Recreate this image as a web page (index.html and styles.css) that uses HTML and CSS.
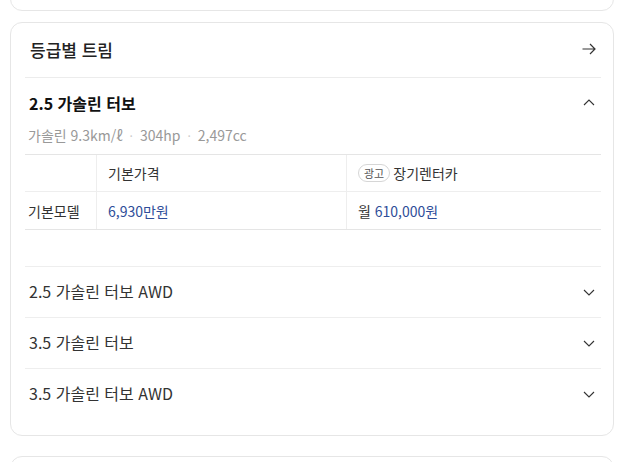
FILE: index.html
```html
<!DOCTYPE html>
<html lang="ko">
<head>
<meta charset="utf-8">
<link rel="stylesheet" href="styles.css">
</head>
<body>
<div class="card card-prev"></div>
<section class="card trims">
  <div class="trims-head">
    <h2 class="trims-title">등급별 트림</h2>
    <svg class="icon-arrow" width="14" height="12" viewBox="0 0 14 12"><path d="M0.5 6H13M8 1l5 5-5 5" fill="none" stroke="#333" stroke-width="1.2"/></svg>
  </div>
  <div class="trim open">
    <div class="trim-row">
      <h3 class="trim-name bold">2.5 가솔린 터보</h3>
      <svg class="chev" width="12" height="7" viewBox="0 0 12 7"><path d="M1 6l5-5 5 5" fill="none" stroke="#333" stroke-width="1.1"/></svg>
    </div>
    <p class="spec">가솔린 9.3km/ℓ<span class="dot">·</span>304hp<span class="dot">·</span>2,497cc</p>
    <div class="price-table">
      <div class="cell c1 head"></div>
      <div class="cell c2 head">기본가격</div>
      <div class="cell c3 head"><span class="ad">광고</span><span>장기렌터카</span></div>
      <div class="cell c1">기본모델</div>
      <div class="cell c2"><span class="blue">6,930만원</span></div>
      <div class="cell c3"><span>월 <span class="blue">610,000원</span></span></div>
    </div>
  </div>
  <div class="trim">
    <div class="trim-row">
      <h3 class="trim-name">2.5 가솔린 터보 AWD</h3>
      <svg class="chev" width="12" height="7" viewBox="0 0 12 7"><path d="M1 1l5 5 5-5" fill="none" stroke="#333" stroke-width="1.1"/></svg>
    </div>
  </div>
  <div class="trim">
    <div class="trim-row">
      <h3 class="trim-name">3.5 가솔린 터보</h3>
      <svg class="chev" width="12" height="7" viewBox="0 0 12 7"><path d="M1 1l5 5 5-5" fill="none" stroke="#333" stroke-width="1.1"/></svg>
    </div>
  </div>
  <div class="trim">
    <div class="trim-row">
      <h3 class="trim-name">3.5 가솔린 터보 AWD</h3>
      <svg class="chev" width="12" height="7" viewBox="0 0 12 7"><path d="M1 1l5 5 5-5" fill="none" stroke="#333" stroke-width="1.1"/></svg>
    </div>
  </div>
</section>
<div class="card card-next"></div>
</body>
</html>
```
FILE: styles.css
```css
* { box-sizing: border-box; }
html, body { margin: 0; padding: 0; background: #fff; }
body {
  font-family: "Noto Sans CJK KR", "Noto Sans", sans-serif;
  color: #222;
  overflow: hidden;
  height: 462px;
}
.card {
  margin: 0 26px 0 10px;
  border: 1px solid #e6e6e6;
  border-radius: 12px;
  background: #fff;
}
.card-prev { height: 40px; margin-top: -29px; }
.card-next { height: 40px; margin-top: 20px; }
.trims { margin-top: 11px; padding: 0 12px 16px 14px; }
.trims-head {
  height: 55px;
  border-bottom: 1px solid #ececec;
  display: flex;
  align-items: center;
  justify-content: space-between;
  padding: 0 5px 1px 5px;
}
.trims-title { margin: 0; font-size: 17px; font-weight: 500; color: #222; line-height: 22px; }
.icon-arrow { display: block; margin-top: -1px; }
.trim { border-top: 1px solid #eeeeee; }
.trims-head + .trim { border-top: none; }
.trim-row {
  height: 50px;
  display: flex;
  align-items: center;
  justify-content: space-between;
  padding: 0 6px 2px 4px;
}
.chev { display: block; margin-top: 2px; }
.trim-name { margin: 0; font-size: 16px; font-weight: 400; color: #333; line-height: 22px; }
.trim-name.bold { font-weight: 700; font-size: 16px; color: #111; }
.open .trim-row { padding-bottom: 0; }
.open .chev { margin-top: -2px; }
.open { padding-bottom: 36px; }
.spec {
  margin: -3px 0 0;
  padding-left: 3px;
  font-size: 14px;
  line-height: 20px;
  color: #999;
}
.dot { color: #ccc; margin: 0 7px; font-size: 12px; }
.price-table {
  margin-top: 8px;
  display: grid;
  grid-template-columns: 71px 250px 1fr;
  border-top: 1px solid #e5e5e5;
  border-bottom: 1px solid #e5e5e5;
}
.cell {
  height: 37px;
  display: flex;
  align-items: center;
  font-size: 14px;
  color: #333;
}
.cell.head { height: 37px; border-bottom: 1px solid #eeeeee; }
.c1 { padding-left: 3px; }
.c2 { padding-left: 11px; border-left: 1px solid #eeeeee; }
.c3 { padding-left: 11px; border-left: 1px solid #eeeeee; }
.blue { color: #2e4d99; }
.ad {
  display: inline-flex;
  align-items: center;
  justify-content: center;
  height: 18px;
  padding: 0 5px;
  border: 1px solid #d6d6d6;
  border-radius: 9px;
  font-size: 11px;
  color: #555;
  margin-right: 3px;
  line-height: 1;
}
```
